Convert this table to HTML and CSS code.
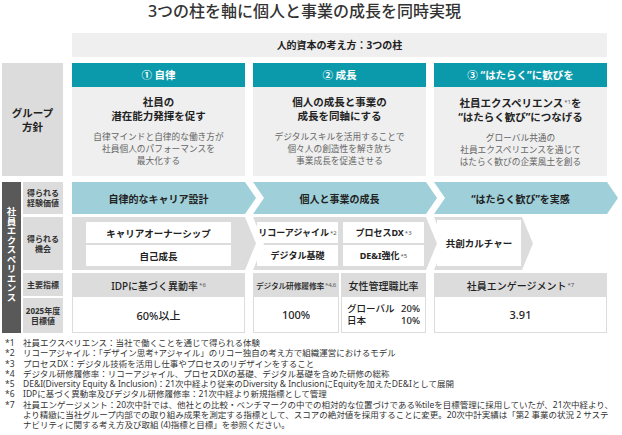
FILE: index.html
```html
<!DOCTYPE html>
<html lang="ja">
<head>
<meta charset="utf-8">
<title>3つの柱</title>
<link rel="stylesheet" href="styles.css">
</head>
<body>
<div class="page">
  <h1 class="title">3つの柱を軸に個人と事業の成長を同時実現</h1>
  <div class="head-row">
    <div class="head-bar">人的資本の考え方：3つの柱</div>
  </div>

  <div class="policy">
    <div class="policy-label">グループ<br>方針</div>
    <div class="pillar">
      <div class="pillar-head">① 自律</div>
      <div class="pillar-body">
        <p class="pillar-title">社員の<br>潜在能力発揮を促す</p>
        <p class="pillar-desc">自律マインドと自律的な働き方が<br>社員個人のパフォーマンスを<br>最大化する</p>
      </div>
    </div>
    <div class="pillar">
      <div class="pillar-head">② 成長</div>
      <div class="pillar-body">
        <p class="pillar-title">個人の成長と事業の<br>成長を同軸にする</p>
        <p class="pillar-desc">デジタルスキルを活用することで<br>個々人の創造性を解き放ち<br>事業成長を促進させる</p>
      </div>
    </div>
    <div class="pillar">
      <div class="pillar-head">③ “はたらく”に歓びを</div>
      <div class="pillar-body">
        <p class="pillar-title">社員エクスペリエンス<span class="sup">*1</span>を<br>“はたらく歓び”につなげる</p>
        <p class="pillar-desc">グローバル共通の<br>社員エクスペリエンスを通じて<br>はたらく歓びの企業風土を創る</p>
      </div>
    </div>
  </div>

  <div class="exp">
    <div class="exp-side"><span class="vert">社員エクスペリエンス</span></div>
    <div class="exp-grid">
      <div class="row-label">得られる<br>経験価値</div>
      <div class="arrow first">自律的なキャリア設計</div>
      <div class="arrow notch">個人と事業の成長</div>
      <div class="arrow notch">“はたらく歓び”を実感</div>

      <div class="row-label">得られる<br>機会</div>
      <div class="opp wide">
        <div class="opp-shape first"></div>
        <div class="opp-body one">
          <div class="box">キャリアオーナーシップ</div>
          <div class="box">自己成長</div>
        </div>
      </div>
      <div class="opp wide">
        <div class="opp-shape notch"></div>
        <div class="opp-body two">
          <div class="box">リコーアジャイル<span class="sup">*2</span></div>
          <div class="box">プロセスDX<span class="sup">*3</span></div>
          <div class="box">デジタル基礎</div>
          <div class="box">DE&amp;I強化<span class="sup">*5</span></div>
        </div>
      </div>
      <div class="opp-wrap">
        <div class="opp single">
          <div class="opp-shape notch"></div>
          <div class="opp-body three">
            <div class="box">共創カルチャー</div>
          </div>
        </div>
      </div>

      <div class="row-split">
        <div class="row-label lab-k">主要指標</div>
        <div class="row-label lab-t">2025年度<br>目標値</div>
      </div>
      <div class="kpi">
        <div class="kpi-head">IDPに基づく異動率<span class="sup">*6</span></div>
        <div class="kpi-val">60%以上</div>
      </div>
      <div class="kpi-pair">
        <div class="kpi">
          <div class="kpi-head small">デジタル研修履修率<span class="sup">*4,6</span></div>
          <div class="kpi-val">100%</div>
        </div>
        <div class="kpi">
          <div class="kpi-head">女性管理職比率</div>
          <div class="kpi-val list"><span>グローバル</span><span>20%</span><span>日本</span><span>10%</span></div>
        </div>
      </div>
      <div class="kpi">
        <div class="kpi-head">社員エンゲージメント<span class="sup">*7</span></div>
        <div class="kpi-val">3.91</div>
      </div>
    </div>
  </div>

  <ul class="notes">
    <li><span class="n">*1</span><span class="t">社員エクスペリエンス：当社で働くことを通じて得られる体験</span></li>
    <li><span class="n">*2</span><span class="t">リコーアジャイル：「デザイン思考+アジャイル」のリコー独自の考え方で組織運営におけるモデル</span></li>
    <li><span class="n">*3</span><span class="t">プロセスDX：デジタル技術を活用し仕事やプロセスのリデザインをすること</span></li>
    <li><span class="n">*4</span><span class="t">デジタル研修履修率：リコーアジャイル、プロセスDXの基礎、デジタル基礎を含めた研修の総称</span></li>
    <li><span class="n">*5</span><span class="t">DE&amp;I(Diversity Equity &amp; Inclusion)：21次中経より従来のDiversity &amp; InclusionにEquityを加えたDE&amp;Iとして展開</span></li>
    <li><span class="n">*6</span><span class="t">IDPに基づく異動率及びデジタル研修履修率：21次中経より新規指標として管理</span></li>
    <li><span class="n">*7</span><span class="t">社員エンゲージメント：20次中計では、他社との比較・ベンチマークの中での相対的な位置づけである%tileを目標管理に採用していたが、21次中経より、<br>より精緻に当社グループ内部での取り組み成果を測定する指標として、スコアの絶対値を採用することに変更。20次中計実績は「第2 事業の状況 2 サステ<br>ナビリティに関する考え方及び取組 (4)指標と目標」を参照ください。</span></li>
  </ul>
</div>
</body>
</html>
```

FILE: styles.css
```css
* { box-sizing: border-box; margin: 0; padding: 0; }

body {
  margin: 0;
  width: 622px;
  height: 435px;
  overflow: hidden;
  background: #fff;
  color: #222;
  font-family: "Noto Sans", "Noto Sans CJK JP", sans-serif;
}

.page {
  width: 607px;
  padding-left: 2px;
}

.title {
  font-size: 16px;
  font-weight: 500;
  line-height: 22px;
  text-align: center;
  color: #333;
  margin-bottom: 11px;
}

.head-row {
  display: flex;
  padding-left: 70px;
}

.head-bar {
  flex: 1;
  height: 24px;
  line-height: 24px;
  background: #efefef;
  text-align: center;
  font-size: 10px;
  font-weight: 700;
  color: #222;
}

/* policy section */
.policy {
  display: flex;
  gap: 8px;
  height: 113px;
  margin-top: 6px;
}

.policy-label {
  width: 61px;
  margin-right: 1px;
  background: #dcdcdc;
  display: flex;
  align-items: center;
  justify-content: center;
  text-align: center;
  font-size: 10.5px;
  font-weight: 700;
  line-height: 14px;
  color: #222;
}

.pillar {
  flex: 0 0 173px;
  display: flex;
  flex-direction: column;
}

.pillar-head {
  height: 24px;
  line-height: 24px;
  background: #0b9aab;
  color: #fff;
  text-align: center;
  font-size: 10.5px;
  font-weight: 700;
}

.pillar-body {
  flex: 1;
  background: #efefef;
  text-align: center;
  padding-top: 8px;
}

.pillar-title {
  font-size: 10.5px;
  font-weight: 700;
  line-height: 14px;
  color: #222;
}

.pillar-desc {
  margin-top: 8px;
  font-size: 8.7px;
  line-height: 12px;
  color: #666;
}

.sup {
  font-size: 6px;
  vertical-align: 3px;
  color: #555;
  font-weight: 400;
  margin-left: 1px;
}

/* experience section */
.exp {
  display: flex;
  gap: 2px;
  height: 151px;
  margin-top: 6px;
}

.exp-side {
  width: 19px;
  background: #595959;
  display: flex;
  align-items: center;
  justify-content: center;
  padding-bottom: 6px;
}

.vert {
  writing-mode: vertical-rl;
  color: #fff;
  font-size: 9.5px;
  font-weight: 700;
  line-height: 12px;
  font-family: "Noto Sans CJK JP", sans-serif;
}

.exp-grid {
  flex: 1;
  display: grid;
  grid-template-columns: 41px 173px 173px 173px;
  grid-template-rows: 32px 53px 60px;
  column-gap: 8px;
  row-gap: 3px;
}

.row-label {
  margin-right: 1px;
  background: #dcdcdc;
  display: flex;
  align-items: center;
  justify-content: center;
  text-align: center;
  font-size: 8px;
  font-weight: 700;
  line-height: 10px;
  color: #333;
}

.row-split {
  display: flex;
  flex-direction: column;
  gap: 2px;
}

.lab-k { height: 23px; }
.lab-t { flex: 1; }

.arrow {
  margin-right: -11px;
  padding-right: 11px;
  background: #9fd0da;
  display: flex;
  align-items: center;
  justify-content: center;
  font-size: 10px;
  font-weight: 700;
  color: #222;
}

.first {
  clip-path: polygon(0 0, calc(100% - 11px) 0, 100% 50%, calc(100% - 11px) 100%, 0 100%);
}

.notch {
  clip-path: polygon(0 0, calc(100% - 11px) 0, 100% 50%, calc(100% - 11px) 100%, 0 100%, 11px 50%);
}

/* opportunity cells: chevron shape layered under the boxes in one grid area */
.opp {
  display: grid;
  grid-template-columns: 1fr;
  grid-template-rows: 1fr;
}

.opp > * {
  grid-area: 1 / 1;
}

.opp.wide {
  margin-right: -11px;
}

.opp-shape {
  background: #dcdcdc;
}

.opp-body {
  position: relative;
}

.opp-body.one {
  padding: 5px 25px 4px 14px;
  display: flex;
  flex-direction: column;
  gap: 2px;
}

.opp-body.two {
  padding: 5px 13px 4px 4px;
  display: grid;
  grid-template-columns: 81px 81px;
  grid-template-rows: 1fr 1fr;
  column-gap: 5px;
  row-gap: 2px;
}

.opp-wrap {
  display: flex;
}

.opp.single {
  width: 99px;
}

.opp-body.three {
  padding: 3px 12px 4px 3px;
  display: flex;
}

.box {
  flex: 1;
  background: #fff;
  display: flex;
  align-items: center;
  justify-content: center;
  font-size: 9.5px;
  font-weight: 700;
  color: #222;
  white-space: nowrap;
}

.opp-body.two .box {
  font-size: 9px;
}

/* KPI */
.kpi {
  display: flex;
  flex-direction: column;
}

.kpi-head {
  height: 24px;
  background: #dcdcdc;
  display: flex;
  align-items: center;
  justify-content: center;
  font-size: 10px;
  font-weight: 500;
  color: #222;
  white-space: nowrap;
}

.kpi-head.small {
  font-size: 7.8px;
  letter-spacing: -0.2px;
}

.kpi-val {
  flex: 1;
  background: #fff;
  border: 1px solid #dcdcdc;
  border-top: 0;
  display: flex;
  align-items: center;
  justify-content: center;
  font-size: 11px;
  font-weight: 500;
  color: #222;
}

.kpi-val.list {
  display: grid;
  grid-template-columns: auto auto;
  justify-content: space-between;
  align-content: center;
  padding: 0 5px;
  font-size: 9.5px;
  line-height: 12px;
}

.kpi-val.list span:nth-child(even) { text-align: right; }

.kpi-pair {
  display: grid;
  grid-template-columns: 86px 85px;
  column-gap: 2px;
}

/* notes */
.notes {
  list-style: none;
  margin-top: 5px;
  padding-left: 3px;
  font-size: 8.5px;
  line-height: 10.3px;
  color: #333;
  white-space: nowrap;
}

.notes li {
  display: flex;
}

.notes .n {
  flex: 0 0 18px;
}
```
